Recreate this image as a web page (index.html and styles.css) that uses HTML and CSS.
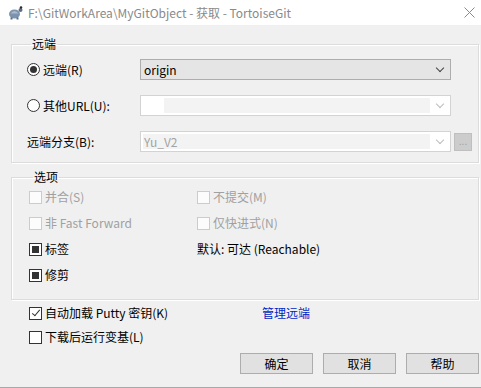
FILE: index.html
```html
<!DOCTYPE html>
<html lang="zh-CN">
<head>
  <meta charset="UTF-8">
  <title>获取 - TortoiseGit</title>
  <link rel="stylesheet" href="styles.css">
</head>
<body>
  <div class="window">
    <div class="titlebar">
      <svg class="app-icon" width="15" height="14" viewBox="0 0 15 14">
        <ellipse cx="6.5" cy="8" rx="5.5" ry="4.5" fill="#7d93ad"/>
        <path d="M2.5 7.5 Q6.5 2.5 10.5 7.5" fill="#a9bbcf"/>
        <circle cx="12.5" cy="4" r="2" fill="#5c6f86"/>
        <circle cx="13" cy="1.5" r="1.3" fill="#2b2b2b"/>
        <rect x="2.5" y="11.5" width="2" height="2" fill="#5c6f86"/>
        <rect x="8.5" y="11.5" width="2" height="2" fill="#5c6f86"/>
      </svg>
      <span class="title-text">F:\GitWorkArea\MyGitObject - 获取 - TortoiseGit</span>
      <svg class="close" width="11" height="11" viewBox="0 0 11 11">
        <path d="M0.5 0.5 L10.5 10.5 M10.5 0.5 L0.5 10.5" stroke="#8a8a8a" stroke-width="1"/>
      </svg>
    </div>

    <div class="content">
      <fieldset class="group remote">
        <legend>远端</legend>
        <div class="remote-grid">
          <label class="radio-row"><span class="radio checked"></span>远端(R)</label>
          <div class="combo active">
            <span class="combo-text">origin</span>
            <span class="chevron"></span>
          </div>
          <span></span>

          <label class="radio-row"><span class="radio"></span>其他URL(U):</label>
          <div class="combo disabled">
            <span class="combo-edit shifted"></span>
            <span class="chevron"></span>
          </div>
          <span></span>

          <span class="plain-label">远端分支(B):</span>
          <div class="combo disabled">
            <span class="combo-edit"><span class="combo-text muted">Yu_V2</span></span>
            <span class="chevron"></span>
          </div>
          <button class="dots" disabled>...</button>
        </div>
      </fieldset>

      <fieldset class="group options">
        <legend>选项</legend>
        <div class="options-grid">
          <label class="check-row off"><span class="check"></span>并合(S)</label>
          <label class="check-row off"><span class="check"></span>不提交(M)</label>
          <label class="check-row off"><span class="check"></span>非 Fast Forward</label>
          <label class="check-row off"><span class="check"></span>仅快进式(N)</label>
          <label class="check-row"><span class="check tri"></span>标签</label>
          <span class="plain-label">默认: 可达 (Reachable)</span>
          <label class="check-row"><span class="check tri"></span>修剪</label>
          <span></span>
        </div>
      </fieldset>

      <div class="extras">
        <label class="check-row"><span class="check ticked"></span>自动加载 Putty 密钥(K)</label>
        <a class="link" href="#">管理远端</a>
        <label class="check-row"><span class="check"></span>下载后运行变基(L)</label>
        <span></span>
      </div>

      <div class="buttons">
        <button class="btn">确定</button>
        <button class="btn">取消</button>
        <button class="btn">帮助</button>
      </div>
    </div>
  </div>
</body>
</html>
```

FILE: styles.css
```css
* {
  box-sizing: border-box;
}

body {
  margin: 0;
  background-color: #f0f0f0;
  font-family: "Noto Sans CJK SC", "Liberation Sans", sans-serif;
  font-size: 12px;
  line-height: 14px;
  color: #000;
}

.window {
  width: 481px;
  height: 388px;
  border-bottom: 1px solid #a8a8a8;
  overflow: hidden;
}

/* title bar */
.titlebar {
  height: 25px;
  background-color: #fff;
  display: flex;
  align-items: center;
  padding-left: 8px;
}

.app-icon {
  margin-right: 5px;
}

.title-text {
  color: #8a8a8a;
  font-size: 12px;
  flex-grow: 1;
}

.close {
  margin-right: 6px;
}

.content {
  padding: 12px 2px 0 11px;
}

/* group boxes */
.group {
  margin: 0;
  border: 1px solid #dcdcdc;
  box-shadow: 1px 1px 0 #fff inset, 1px 1px 0 #fff;
  min-inline-size: 0;
}

.group legend {
  margin-left: 4px;
  padding: 0 1px;
  line-height: 14px;
}

.remote {
  padding: 8px 0 10px 15px;
}

.remote-grid {
  display: grid;
  grid-template-columns: 110px 311px 18px;
  grid-auto-rows: 21px;
  column-gap: 3px;
  row-gap: 15px;
  align-items: center;
}

.radio-row,
.check-row {
  display: flex;
  align-items: center;
  gap: 3px;
  white-space: nowrap;
}

.radio {
  width: 13px;
  height: 13px;
  border: 1px solid #333;
  border-radius: 50%;
  background-color: #fff;
  display: flex;
  align-items: center;
  justify-content: center;
}

.radio.checked::after {
  content: "";
  width: 7px;
  height: 7px;
  border-radius: 50%;
  background-color: #333;
}

.plain-label {
  white-space: nowrap;
}

/* combo boxes */
.combo {
  height: 21px;
  position: relative;
  display: flex;
  align-items: center;
  padding-left: 3px;
}

.combo.active {
  background-color: #e5e5e5;
  border: 1px solid #adadad;
}

.combo.disabled {
  background-color: #fff;
  border: 1px solid #d3d3d3;
  padding: 2px 20px 2px 2px;
}

.combo-edit {
  flex-grow: 1;
  height: 100%;
  background-color: #f3f3f3;
  display: flex;
  align-items: center;
  padding-left: 1px;
}

.combo-edit.shifted {
  margin-left: 21px;
}

.combo-text {
  line-height: 14px;
}

.combo-text.muted {
  color: #a3a3a3;
}

.chevron {
  position: absolute;
  right: 7px;
  top: 5px;
  width: 6px;
  height: 6px;
  border-right: 1px solid #444;
  border-bottom: 1px solid #444;
  transform: rotate(45deg);
}

.combo.disabled .chevron {
  border-color: #bcbcbc;
}

.dots {
  width: 18px;
  height: 18px;
  padding: 0;
  margin: 0;
  border: 1px solid #bfbfbf;
  background-color: #cccccc;
  color: #a0a0a0;
  font-family: "Liberation Sans", sans-serif;
  font-size: 10px;
  line-height: 12px;
}

/* options */
.options {
  margin-top: 7px;
  padding: 3px 0 14px 17px;
}

.options-grid {
  display: grid;
  grid-template-columns: 168px auto;
  grid-auto-rows: 20px;
  row-gap: 6px;
  align-items: center;
}

.check {
  width: 13px;
  height: 13px;
  border: 1px solid #333;
  background-color: #fff;
  display: flex;
  align-items: center;
  justify-content: center;
}

.check-row.off {
  color: #a0a0a0;
}

.check-row.off .check {
  border-color: #cccccc;
  background-color: #fcfcfc;
}

.check.tri::after {
  content: "";
  width: 7px;
  height: 7px;
  background-color: #333;
}

.check.ticked::after {
  content: "";
  width: 3px;
  height: 7px;
  border-right: 1px solid #333;
  border-bottom: 1px solid #333;
  transform: translateY(-1px) rotate(40deg);
}

/* bottom part */
.extras {
  display: grid;
  grid-template-columns: 233px auto;
  grid-auto-rows: 20px;
  row-gap: 4px;
  align-items: center;
  margin-top: 3px;
  padding-left: 18px;
}

.link {
  color: #0026c4;
  text-decoration: none;
}

.buttons {
  display: flex;
  justify-content: flex-end;
  gap: 10px;
  margin-top: 6px;
}

.btn {
  width: 73px;
  height: 21px;
  margin: 0;
  padding: 0;
  border: 1px solid #adadad;
  background-color: #e1e1e1;
  font-family: "Noto Sans CJK SC", sans-serif;
  font-size: 12px;
  line-height: 14px;
  color: #000;
}
```
